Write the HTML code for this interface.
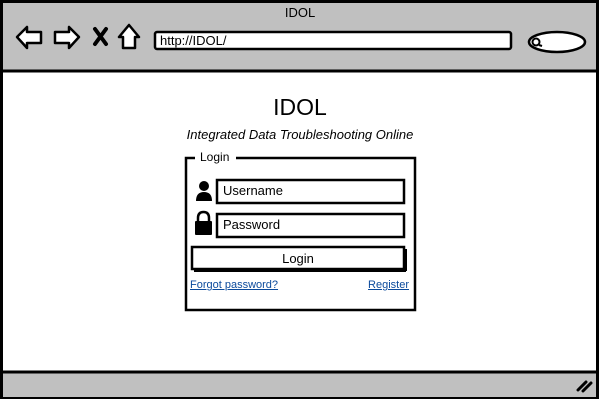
<!DOCTYPE html>
<html><head><style>
body{margin:0;width:600px;height:400px;overflow:hidden;background:#fff;font-family:"Liberation Sans",sans-serif;}
.a{position:absolute;}
</style></head><body>
<svg class="a" style="left:0;top:0" width="600" height="400">
<rect x="1.5" y="1.5" width="596" height="396" fill="#fff" stroke="#000" stroke-width="3"/>
<rect x="3" y="3" width="593" height="68" fill="#c0c0c0"/>
<line x1="2" y1="71" x2="597" y2="71" stroke="#000" stroke-width="3"/>
<rect x="3" y="373" width="593" height="24" fill="#c0c0c0"/>
<line x1="2" y1="372" x2="597" y2="372" stroke="#000" stroke-width="3"/>
<path d="M578 390 L586 382 M583 391 L591 383" stroke="#000" stroke-width="3" stroke-linecap="round"/>
<path d="M17 37 L27 27 L27 32 L41 32 L41 43 L27 43 L27 48 Z" fill="#fff" stroke="#000" stroke-width="2.5" stroke-linejoin="round"/>
<path d="M79 37 L69 27 L69 32 L55 32 L55 43 L69 43 L69 48 Z" fill="#fff" stroke="#000" stroke-width="2.5" stroke-linejoin="round"/>
<path d="M95 29 L106 44 M106 29 L95 44" stroke="#000" stroke-width="4" stroke-linecap="round"/>
<path d="M129 25 L119 37 L123 37 L123 48 L135 48 L135 37 L139 37 Z" fill="#fff" stroke="#000" stroke-width="2.5" stroke-linejoin="round"/>
<rect x="155" y="32" width="356" height="17" rx="2" fill="#fff" stroke="#000" stroke-width="2.5"/>
<ellipse cx="557" cy="42" rx="28" ry="10" fill="#fff" stroke="#000" stroke-width="2.5"/>
<circle cx="536" cy="42" r="3.5" fill="none" stroke="#000" stroke-width="2"/>
<line x1="539" y1="45" x2="542" y2="46" stroke="#000" stroke-width="2"/>
<path d="M195 158 L186 158 L186 310 L415 310 L415 158 L236 158" fill="none" stroke="#000" stroke-width="2.5"/>
<rect x="217" y="180" width="187" height="23" fill="#fff" stroke="#000" stroke-width="2.5"/>
<rect x="217" y="214" width="187" height="23" fill="#fff" stroke="#000" stroke-width="2.5"/>
<rect x="192" y="247" width="212" height="22" fill="#fff" stroke="#000" stroke-width="2.5"/>
<line x1="194" y1="271" x2="406" y2="271" stroke="#000" stroke-width="2"/>
<line x1="406" y1="249" x2="406" y2="271" stroke="#000" stroke-width="2"/>
<circle cx="204" cy="186" r="5" fill="#000"/>
<path d="M196 201 Q196 192 204 192 Q212 192 212 201 Z" fill="#000"/>
<path d="M198 222 L198 218 Q198 212 203.5 212 Q209 212 209 218 L209 222" fill="none" stroke="#000" stroke-width="2.5"/>
<rect x="195" y="221" width="17" height="14" rx="1" fill="#000"/>
</svg>
<div class="a" style="left:0;width:600px;top:5px;text-align:center;font-size:13px">IDOL</div>
<div class="a" style="left:160px;top:33px;font-size:13px">http://IDOL/</div>
<div class="a" style="left:0;width:600px;top:94px;text-align:center;font-size:23px">IDOL</div>
<div class="a" style="left:0;width:600px;top:127px;text-align:center;font-size:13px;font-style:italic">Integrated Data Troubleshooting Online</div>
<div class="a" style="left:200px;top:150px;font-size:12px">Login</div>
<div class="a" style="left:223px;top:183px;font-size:13px">Username</div>
<div class="a" style="left:223px;top:217px;font-size:13px">Password</div>
<div class="a" style="left:192px;width:212px;top:251px;text-align:center;font-size:13px">Login</div>
<div class="a" style="left:190px;top:279px;font-size:11px;color:#0b4a9c;text-decoration:underline">Forgot password?</div>
<div class="a" style="left:340px;width:69px;text-align:right;top:279px;font-size:11px;color:#0b4a9c;text-decoration:underline">Register</div>
</body></html>
